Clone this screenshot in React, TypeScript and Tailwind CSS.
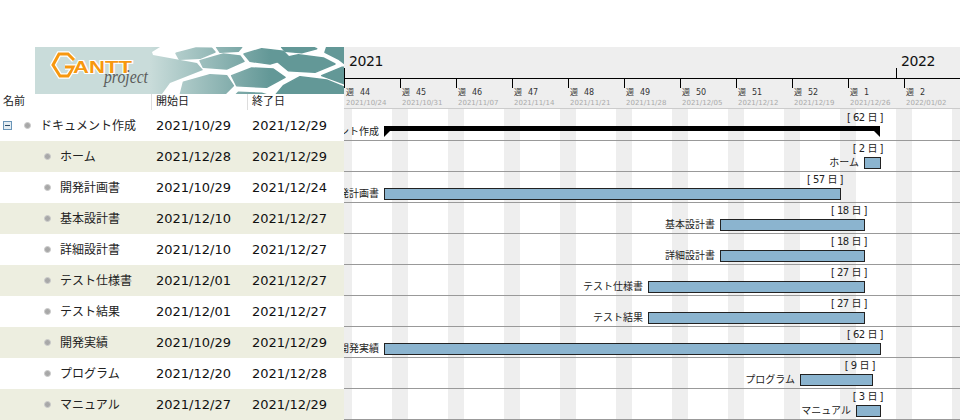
import React from 'react'

const DAY = 8

type Task = { name: string; start: string; end: string; from: number; days: number; dur: string }

const tasks: Task[] = [
  { name: 'ホーム', start: '2021/12/28', end: '2021/12/29', from: 65, days: 2, dur: '2' },
  { name: '開発計画書', start: '2021/10/29', end: '2021/12/24', from: 5, days: 57, dur: '57' },
  { name: '基本設計書', start: '2021/12/10', end: '2021/12/27', from: 47, days: 18, dur: '18' },
  { name: '詳細設計書', start: '2021/12/10', end: '2021/12/27', from: 47, days: 18, dur: '18' },
  { name: 'テスト仕様書', start: '2021/12/01', end: '2021/12/27', from: 38, days: 27, dur: '27' },
  { name: 'テスト結果', start: '2021/12/01', end: '2021/12/27', from: 38, days: 27, dur: '27' },
  { name: '開発実績', start: '2021/10/29', end: '2021/12/29', from: 5, days: 62, dur: '62' },
  { name: 'プログラム', start: '2021/12/20', end: '2021/12/28', from: 57, days: 9, dur: '9' },
  { name: 'マニュアル', start: '2021/12/27', end: '2021/12/29', from: 64, days: 3, dur: '3' },
]

const weeks = [
  ['44', '2021/10/24'],
  ['45', '2021/10/31'],
  ['46', '2021/11/07'],
  ['47', '2021/11/14'],
  ['48', '2021/11/21'],
  ['49', '2021/11/28'],
  ['50', '2021/12/05'],
  ['51', '2021/12/12'],
  ['52', '2021/12/19'],
  ['1', '2021/12/26'],
  ['2', '2022/01/02'],
]

// traced off the banner at 3x, so each point is divided by 3 when drawn
const hexes = [
  '18,28 78,12 125,13 135,24 90,43 28,46',
  '140,10 215,10 205,22 150,25',
  '222,30 275,14 340,22 360,42 300,60 240,52',
  '335,10 430,10 440,14 395,26 345,22',
  '90,50 160,30 210,36 222,52 170,75 100,70',
  '315,47 385,32 460,42 495,60 435,85 355,80',
  '470,10 525,10 525,60 505,45 465,25',
  '185,95 245,72 310,75 345,100 290,130 200,125',
  '40,115 120,92 170,95 190,125 160,155 30,155',
  '315,155 340,125 390,98 470,108 525,130 525,155',
  '455,95 515,70 525,70 525,120',
  '205,145 275,148 300,155 195,155',
]

const Banner = () => (
  <svg width="309" height="47" viewBox="0 0 309 47" className="block">
    <defs>
      <linearGradient id="hex" gradientUnits="userSpaceOnUse" x1="115" x2="235" y1="0" y2="0">
        <stop offset="0" stopColor="#c9dcda" />
        <stop offset="1" stopColor="#639897" />
      </linearGradient>
    </defs>
    <rect width="309" height="47" fill="#fff" />
    <polygon points="0,0 125,0 117,5 118,8 162,16 168,23 135,36 127,47 0,47" fill="url(#hex)" />
    {hexes.map((p) => (
      <polygon
        key={p}
        fill="url(#hex)"
        stroke="url(#hex)"
        strokeWidth="1.5"
        strokeLinejoin="round"
        points={p
          .split(' ')
          .map((c) => {
            const [x, y] = c.split(',').map(Number)
            return `${135 + x / 3},${y / 3 - 3}`
          })
          .join(' ')}
      />
    ))}
    <path d="M39 13 L33 7 L24 7 L18 18 L25 29 L33 29 L39 20 L30 20" fill="none" stroke="#fff" strokeWidth="5.5" />
    <path d="M39 13 L33 7 L24 7 L18 18 L25 29 L33 29 L39 20 L30 20" fill="none" stroke="#f7980f" strokeWidth="3" />
    <text x="38" y="26" fontFamily="'Liberation Sans', sans-serif" fontWeight="700" fontSize="17" fill="#f7980f" stroke="#fff" strokeWidth="2" paintOrder="stroke" textLength="59" lengthAdjust="spacingAndGlyphs">ANTT</text>
    <text x="69" y="36" fontFamily="'Liberation Serif', serif" fontStyle="italic" fontSize="18" fill="#5c5c5c" textLength="44" lengthAdjust="spacingAndGlyphs">project</text>
  </svg>
)

const Row = ({ t, i }: { t: Task; i: number }) => (
  <div className={`flex h-[31px] items-center text-[13px] text-[#111] ${i % 2 === 0 ? 'bg-[#edeee0]' : 'bg-white'}`}>
    <span className="ml-[44px] h-[7px] w-[7px] rounded-full border border-[#ccc] bg-[#a8a8a8]" />
    <span className="ml-[9px] w-[96px] text-[12px] text-[#222]">{t.name}</span>
    <span className="w-[96px]">{t.start}</span>
    <span>{t.end}</span>
  </div>
)

const Bar = ({ from, days, label, dur, summary }: { from: number; days: number; label: string; dur: string; summary?: boolean }) => {
  const left = from * DAY
  const width = days * DAY
  return (
    <div className="relative h-[31px] overflow-hidden border-b border-[#999]">
      <span
        className="absolute top-px -translate-x-full whitespace-nowrap text-[10px] leading-[14px] tracking-[-0.5px] text-[#222]"
        style={{ left: left + width + 3 }}
      >
        [ {dur} 日 ]
      </span>
      <span
        className="absolute top-[15px] -translate-x-full whitespace-nowrap text-[10px] leading-[14px] text-[#222]"
        style={{ left: left - 5 }}
      >
        {label}
      </span>
      {summary ? (
        <>
          <div className="absolute top-[16px] h-[5px] bg-black" style={{ left, width }} />
          <div className="absolute top-[21px] h-0 w-0 border-t-[6px] border-r-[6px] border-t-black border-r-transparent" style={{ left }} />
          <div className="absolute top-[21px] h-0 w-0 border-t-[6px] border-l-[6px] border-t-black border-l-transparent" style={{ left: left + width - 6 }} />
        </>
      ) : (
        <div className="absolute top-[16px] h-[12px] border border-[#222] bg-[#8bb4cf]" style={{ left, width: width + 1 }} />
      )}
    </div>
  )
}

export default function App() {
  return (
    <div className="flex h-[420px] w-[960px] overflow-hidden bg-white pt-[47px] font-['DejaVu_Sans','Noto_Sans_CJK_JP',sans-serif]">
      <div className="w-[344px] shrink-0">
        <div className="ml-[35px]">
          <Banner />
        </div>
        <div className="flex h-[16px] items-center text-[11px] text-[#222]">
          <span className="ml-[3px] w-[148px]">名前</span>
          <span className="w-[96px] border-l border-[#ddd] pl-[4px]">開始日</span>
          <span className="border-l border-[#ddd] pl-[4px]">終了日</span>
        </div>
        <div className="flex h-[31px] items-center text-[13px] text-[#111]">
          <span className="ml-[3px] flex h-[9px] w-[9px] items-center justify-center border border-[#6a95b8] bg-[#e4edf3]">
            <span className="h-px w-[5px] bg-[#2b4a66]" />
          </span>
          <span className="ml-[12px] h-[7px] w-[7px] rounded-full border border-[#ccc] bg-[#a8a8a8]" />
          <span className="ml-[9px] w-[116px] text-[12px] text-[#222]">ドキュメント作成</span>
          <span className="w-[96px]">2021/10/29</span>
          <span>2021/12/29</span>
        </div>
        {tasks.map((t, i) => (
          <Row key={t.name} t={t} i={i} />
        ))}
      </div>

      <div className="relative min-w-0 flex-1 overflow-hidden">
        <div className="h-[62px] bg-[#eeeeee]">
          <div className="relative h-[32px] border-b border-black text-[14px] leading-[28px] tracking-[-0.4px] text-[#111]">
            <span className="absolute left-[5px] top-0">2021</span>
            <span className="absolute left-[557px] top-0">2022</span>
            <span className="absolute bottom-0 left-[552px] h-[10px] w-px bg-black" />
            <span className="absolute bottom-0 left-0 h-[10px] w-px bg-black" />
          </div>
          <div className="flex h-[30px] border-b border-[#ccc]">
            {weeks.map(([n, d]) => (
              <div key={d} className="w-[56px] shrink-0 pl-[2px]">
                <div className="-ml-[2px] h-[9px] w-px bg-black" />
                <div className="flex text-[8px] leading-[10px] text-[#333]">
                  <span>週</span>
                  <span className="ml-[6px]">{n}</span>
                </div>
                <div className="whitespace-nowrap text-[7px] leading-[11px] text-[#aaa]">{d}</div>
              </div>
            ))}
          </div>
        </div>
        <div className="relative pt-px">
          <div className="absolute inset-0 flex">
            {weeks.map(([, d]) => (
              <div key={d} className="flex w-[56px] shrink-0 justify-between">
                <div className="h-full w-[8px] bg-[#eeeeee]" />
                <div className="h-full w-[8px] bg-[#eeeeee]" />
              </div>
            ))}
          </div>
          <Bar from={5} days={62} label="ドキュメント作成" dur="62" summary />
          {tasks.map((t) => (
            <Bar key={t.name} from={t.from} days={t.days} label={t.name} dur={t.dur} />
          ))}
        </div>
      </div>
    </div>
  )
}
